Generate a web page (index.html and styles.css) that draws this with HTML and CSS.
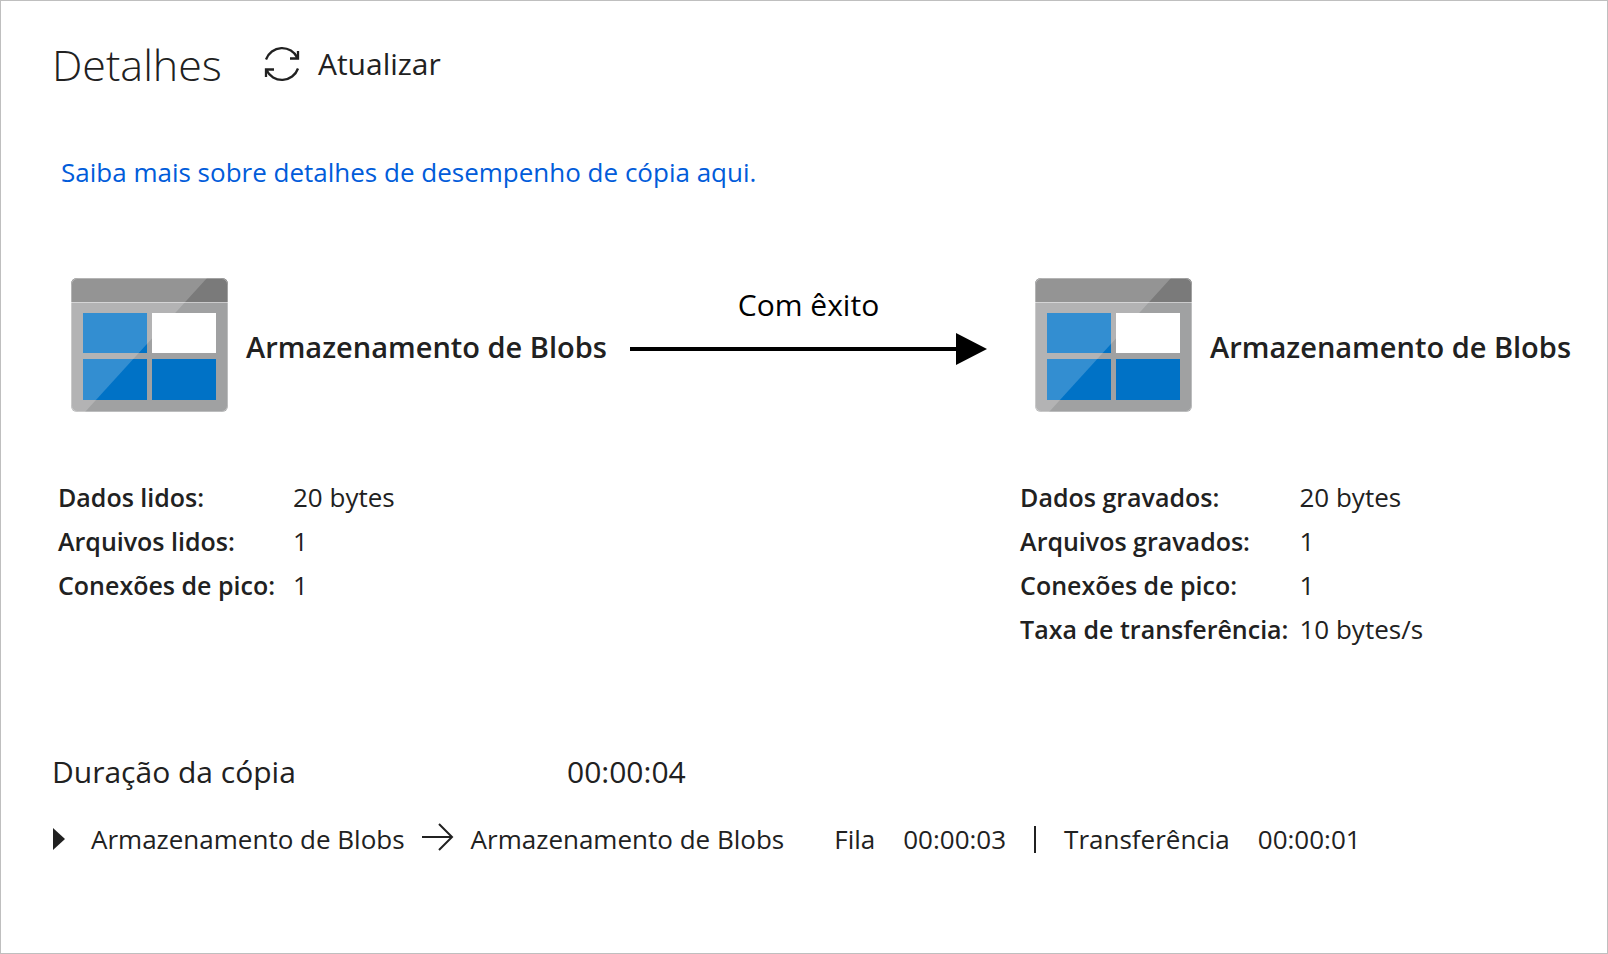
FILE: index.html
```html
<!DOCTYPE html>
<html lang="pt-BR">
<head>
<meta charset="utf-8">
<meta name="viewport" content="width=device-width, initial-scale=1">
<title>Detalhes</title>
<link rel="stylesheet" href="styles.css">
</head>
<body>
<svg class="sprite" aria-hidden="true">
  <symbol id="blob-storage" viewBox="0 0 157 134">
    <rect x="0" y="0" width="157" height="134" rx="6" fill="#a0a1a2"/>
    <path d="M0 24V6a6 6 0 0 1 6-6h145a6 6 0 0 1 6 6v18z" fill="#7a7a7a"/>
    <rect x="12" y="35" width="64" height="40" fill="#0072c6"/>
    <rect x="12" y="81" width="64" height="41" fill="#0072c6"/>
    <rect x="81" y="81" width="64" height="41" fill="#0072c6"/>
    <path d="M6 0H136L14 134H6a6 6 0 0 1-6-6V6a6 6 0 0 1 6-6z" fill="#fff" opacity=".2"/>
    <rect x="81" y="35" width="64" height="40" fill="#fff"/>
    <path d="M0 24.500H157" stroke="#fff" stroke-opacity=".45"/>
    <rect x=".5" y=".5" width="156" height="133" rx="6" fill="none" stroke="#fff" stroke-opacity=".3"/>
  </symbol>
</svg>
<main class="panel">
  <header class="header">
    <h1 class="title">Detalhes</h1>
    <button class="refresh" type="button">
      <svg class="refresh-icon" viewBox="0 0 36 36" aria-hidden="true">
        <path d="M2 13.500A17 17 0 0 1 33.500 12M34 5V12.500H26M34 22.500A17 17 0 0 1 2.500 24M2 31V23.500H10"/>
      </svg>
      Atualizar
    </button>
  </header>
  <a class="learn-more" href="#">Saiba mais sobre detalhes de desempenho de cópia aqui.</a>
  <section class="flow">
    <div class="node">
      <svg class="node-icon" aria-hidden="true"><use href="#blob-storage"/></svg>
      <span class="node-name">Armazenamento de Blobs</span>
    </div>
    <div class="link">
      <span class="link-status">Com êxito</span>
      <div class="link-arrow"></div>
    </div>
    <div class="node node-sink">
      <svg class="node-icon" aria-hidden="true"><use href="#blob-storage"/></svg>
      <span class="node-name">Armazenamento de Blobs</span>
    </div>
    <table class="metrics">
      <tr><th scope="row">Dados lidos:</th><td>20 bytes</td></tr>
      <tr><th scope="row">Arquivos lidos:</th><td>1</td></tr>
      <tr><th scope="row">Conexões de pico:</th><td>1</td></tr>
    </table>
    <table class="metrics metrics-sink">
      <tr><th scope="row">Dados gravados:</th><td>20 bytes</td></tr>
      <tr><th scope="row">Arquivos gravados:</th><td>1</td></tr>
      <tr><th scope="row">Conexões de pico:</th><td>1</td></tr>
      <tr><th scope="row">Taxa de transferência:</th><td>10 bytes/s</td></tr>
    </table>
  </section>
  <section class="duration">
    <div class="total">
      <span class="total-label">Duração da cópia</span>
      <span>00:00:04</span>
    </div>
    <div class="stage">
      <button class="expand" type="button" aria-label="Expandir">
        <svg class="expand-icon" viewBox="0 0 12 22" aria-hidden="true"><path d="M0 0L12 11L0 22z"/></svg>
      </button>
      <span>Armazenamento de Blobs</span>
      <svg class="stage-arrow" viewBox="0 0 32 28" aria-hidden="true"><path d="M0 12H30M17 -1L30 12L17 25"/></svg>
      <span>Armazenamento de Blobs</span>
      <div class="timings">
        <span>Fila</span>
        <span>00:00:03</span>
        <span class="divider"></span>
        <span>Transferência</span>
        <span>00:00:01</span>
      </div>
    </div>
  </section>
</main>
</body>
</html>
```
FILE: styles.css
```css
* {
  box-sizing: border-box;
}

body {
  margin: 0;
  background: #fff;
  color: #212121;
  font-family: "Open Sans", "Noto Sans", sans-serif;
  font-size: 26px;
  line-height: 44px;
}

.sprite {
  display: none;
}

.panel {
  min-height: 100vh;
  padding: 34px 36px 32px 51px;
  border: 1px solid #bfbfbf;
}

.header {
  display: flex;
  align-items: center;
  gap: 42px;
}

.title {
  margin: 0;
  font-size: 43px;
  font-weight: 300;
  line-height: 60px;
}

.refresh,
.expand {
  display: flex;
  align-items: center;
  padding: 0;
  border: 0;
  background: none;
  color: inherit;
  font: inherit;
}

.refresh {
  gap: 18px;
  margin-bottom: 2px;
  font-size: 30px;
}

.refresh-icon {
  width: 36px;
  height: 36px;
  fill: none;
  stroke: currentColor;
  stroke-width: 2.3;
}

.learn-more {
  display: inline-block;
  margin: 55px 0 0 9px;
  color: #015cda;
  text-decoration: none;
}

.flow {
  display: grid;
  grid-template-columns: auto 1fr auto;
  margin: 84px 0 0 6px;
  row-gap: 63px;
}

.node {
  display: flex;
  align-items: center;
  gap: 18px;
  padding-left: 13px;
  font-size: 29px;
  font-weight: 600;
  white-space: nowrap;
}

.node-sink {
  padding-left: 15px;
}

.node-icon {
  flex: none;
  width: 157px;
  height: 134px;
}

.node-name {
  padding-top: 3px;
}

.link {
  display: flex;
  flex-direction: column;
  align-items: center;
  padding: 5px 33px 0 23px;
  color: #000;
  font-size: 30px;
}

.link-arrow {
  display: flex;
  align-items: center;
  align-self: stretch;
  margin-top: 6px;
}

.link-arrow::before {
  flex: 1;
  height: 4px;
  background: #000;
  content: "";
}

.link-arrow::after {
  border: 16px solid transparent;
  border-right-width: 0;
  border-left: 31px solid #000;
  content: "";
}

.metrics {
  align-self: start;
  justify-self: start;
  border-collapse: collapse;
}

.metrics-sink {
  grid-column: 3;
}

.metrics th,
.metrics td {
  padding: 0;
  text-align: left;
  white-space: nowrap;
}

.metrics th {
  min-width: 235px;
  padding-right: 11px;
  font-size: 25px;
  font-weight: 600;
}

.duration {
  margin-top: 99px;
}

.total {
  display: flex;
  font-size: 30px;
}

.total-label {
  width: 515px;
}

.stage {
  display: flex;
  align-items: center;
  margin-top: 23px;
  white-space: nowrap;
}

.expand {
  margin: 0 26px 0 1px;
}

.expand-icon {
  width: 12px;
  height: 22px;
  fill: currentColor;
}

.stage-arrow {
  width: 32px;
  height: 28px;
  margin: 0 17px;
  overflow: visible;
  fill: none;
  stroke: currentColor;
  stroke-width: 2;
}

.timings {
  display: flex;
  align-items: center;
  gap: 28px;
  margin-left: 50px;
}

.divider {
  width: 2px;
  height: 27px;
  background: currentColor;
}
```
